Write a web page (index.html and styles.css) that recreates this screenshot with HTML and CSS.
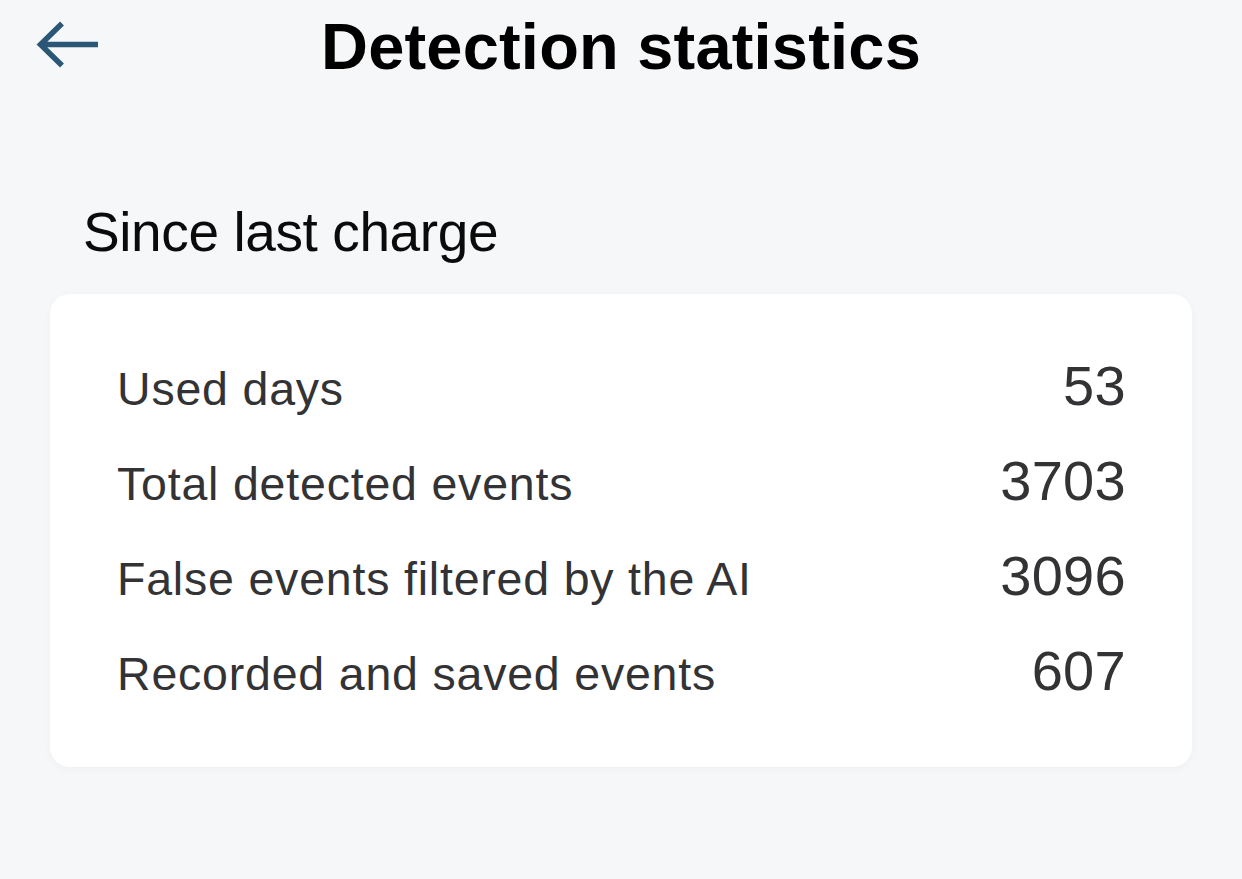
FILE: index.html
```html
<!DOCTYPE html>
<html lang="en">
<head>
<meta charset="utf-8">
<title>Detection statistics</title>
<link rel="stylesheet" href="styles.css">
</head>
<body>
<div class="page">
  <header class="header">
    <div class="back">
      <svg class="back-icon" width="64" height="50" viewBox="0 0 64 50" aria-hidden="true">
        <path d="M26 2.5 L4.5 23.5 L26 44.5 M4.5 23.5 L62 23.5" fill="none" stroke="#2b5777" stroke-width="5.5" stroke-linecap="butt" stroke-linejoin="miter"/>
      </svg>
    </div>
    <h1 class="title">Detection statistics</h1>
    <div class="spacer"></div>
  </header>
  <h2 class="section-title">Since last charge</h2>
  <section class="card">
    <div class="row"><span class="label">Used days</span><span class="value">53</span></div>
    <div class="row"><span class="label">Total detected events</span><span class="value">3703</span></div>
    <div class="row"><span class="label">False events filtered by the AI</span><span class="value">3096</span></div>
    <div class="row"><span class="label">Recorded and saved events</span><span class="value">607</span></div>
  </section>
</div>
</body>
</html>
```
FILE: styles.css
```css
html, body {
  margin: 0;
  padding: 0;
  background: #f6f7f9;
}
body {
  font-family: "Liberation Sans", Arial, sans-serif;
  width: 1242px;
  height: 879px;
  overflow: hidden;
}
.page {
  padding: 0 50px;
}
.header {
  display: grid;
  grid-template-columns: 1fr auto 1fr;
  align-items: start;
  padding-top: 14px;
  margin: 0 -50px;
}
.back {
  padding-left: 36px;
  padding-top: 7px;
}
.back-icon {
  display: block;
}
.title {
  margin: 0;
  font-size: 65px;
  line-height: 65px;
  font-weight: 700;
  color: #000;
  letter-spacing: 0.2px;
}
.section-title {
  margin: 126px 0 0 33px;
  font-size: 55px;
  line-height: 55px;
  font-weight: 400;
  color: #0b0b0b;
  letter-spacing: -0.4px;
}
.card {
  margin-top: 34px;
  background: #fff;
  border-radius: 20px;
  padding: 45px 66px 48px 67px;
  box-shadow: 0 2px 10px rgba(0, 0, 0, 0.035);
}
.row {
  display: flex;
  justify-content: space-between;
  align-items: baseline;
  padding: 19px 0 20px;
}
.label {
  font-size: 46.5px;
  line-height: 1;
  color: #333335;
  letter-spacing: 0.8px;
}
.value {
  font-size: 56px;
  line-height: 1;
  color: #333335;
  letter-spacing: 0.3px;
}
```
